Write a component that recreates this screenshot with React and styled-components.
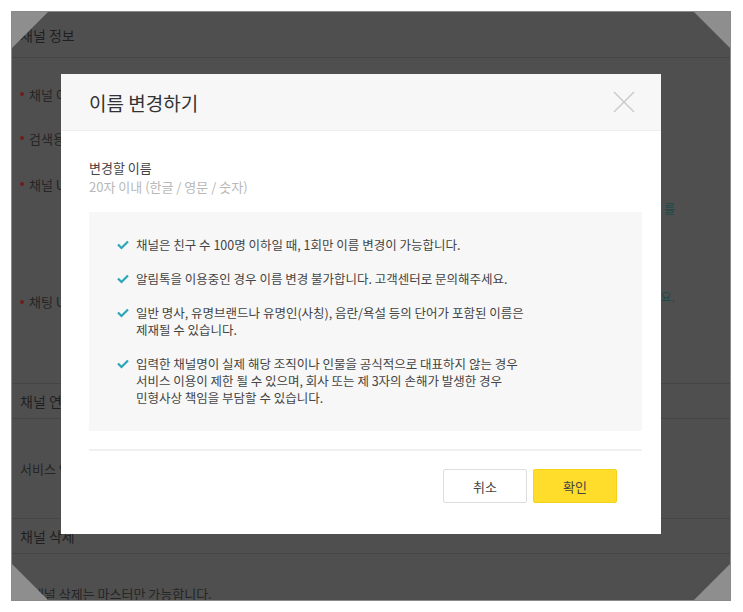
import React from "react";
import styled, { createGlobalStyle } from "styled-components";

const G = createGlobalStyle`
  body { margin: 0; background: #fff; font-family: "Noto Sans CJK KR", "Noto Sans", sans-serif; }
`;
const Frame = styled.div`
  position: relative; margin: 11px 11px 0 11px; width: 720px; height: 590px;
  background: #4f4f4f; border: 1px solid #8a8a8a; box-sizing: border-box; overflow: hidden;
`;
const SecHead = styled.div`
  height: ${p => p.h || 46}px; display: flex; align-items: center; padding-left: 8px;
  font-size: 14px; color: #1f1f1f; border-bottom: 1px solid #454545; box-sizing: border-box;
  border-top: ${p => p.bt ? "1px solid #454545" : "none"};
`;
const Row = styled.div`
  height: ${p => p.h}px; padding-left: 8px; display: flex; align-items: center;
  font-size: 13px; color: #252525; gap: 5px; box-sizing: border-box; padding-top: ${p => p.pt || 0}px;
`;
const Dot = styled.span`width: 4px; height: 4px; border-radius: 50%; background: ${p => p.c || "#6b1e1a"};`;
const Teal = styled.span`position: absolute; right: 55px; top: ${p => p.t}px; color: #1a4a48; font-size: 12px;`;
const Corner = styled.div`
  position: absolute; width: 36px; height: 36px; background: #8e8e8e;
  ${p => p.pos}
`;
const Overlay = styled.div`
  position: absolute; left: 49px; top: 62px; width: 600px; height: 460px; background: #fff;
  display: flex; flex-direction: column;
`;
const MHead = styled.div`
  height: 57px; background: #f7f7f7; border-bottom: 1px solid #eee; display: flex;
  align-items: center; justify-content: space-between; padding: 0 26px 0 28px; box-sizing: border-box;
`;
const Title = styled.div`font-size: 19px; color: #333;`;
const Body = styled.div`padding: 27px 19px 0 28px;`;
const Label = styled.div`font-size: 13px; color: #444; line-height: 19px;`;
const Sub = styled.div`font-size: 13px; color: #b8b8b8; line-height: 19px;`;
const Box = styled.div`
  margin-top: 16px; background: #f7f7f7; height: 219px; box-sizing: border-box;
  padding: 24px 28px 0 28px; display: flex; flex-direction: column; gap: 17px;
`;
const Item = styled.div`display: flex; gap: 7px; font-size: 12.5px; color: #444; line-height: 17px;`;
const Hr = styled.div`margin-top: 18px; height: 2px; background: #f0f0f0;`;
const Btns = styled.div`display: flex; justify-content: flex-end; gap: 6px; padding: 18px 25px 0 0;`;
const Btn = styled.button`
  width: 84px; height: 34px; font-family: inherit; font-size: 13px; color: #444;
  background: ${p => p.y ? "#ffdd2a" : "#fff"}; border: 1px solid ${p => p.y ? "#f5d21e" : "#ddd"}; border-radius: 2px;
`;

const Check = () => (
  <svg width="12" height="17" viewBox="0 0 12 17" style={{ flex: "none" }}>
    <path d="M1 8.5l3.5 3.5L11 5.5" stroke="#2aa6b8" strokeWidth="2.2" fill="none" />
  </svg>
);

const items = [
  ["채널은 친구 수 100명 이하일 때, 1회만 이름 변경이 가능합니다."],
  ["알림톡을 이용중인 경우 이름 변경 불가합니다. 고객센터로 문의해주세요."],
  ["일반 명사, 유명브랜드나 유명인(사칭), 음란/욕설 등의 단어가 포함된 이름은", "제재될 수 있습니다."],
  ["입력한 채널명이 실제 해당 조직이나 인물을 공식적으로 대표하지 않는 경우", "서비스 이용이 제한 될 수 있으며, 회사 또는 제 3자의 손해가 발생한 경우", "민형사상 책임을 부담할 수 있습니다."],
];

export default function App() {
  return (
    <>
      <G />
      <Frame>
        <SecHead>채널 정보</SecHead>
        <Row h={70} pt={2}><Dot />채널 이름</Row>
        <Row h={20}><Dot />검색용 아이디</Row>
        <Row h={72}><Dot />채널 URL</Row>
        <Row h={163}><Dot />채팅 URL</Row>
        <SecHead h={36} bt>채널 연결</SecHead>
        <Row h={99}>서비스 연결</Row>
        <SecHead h={36} bt>채널 삭제</SecHead>
        <Row h={70} pt={8}><Dot c="#777" />&nbsp;채널 삭제는 마스터만 가능합니다.</Row>
        <Teal t={188}>를</Teal>
        <Teal t={276}>요.</Teal>
        <Corner pos="left:0;top:0;clip-path:polygon(0 0,100% 0,0 100%);" />
        <Corner pos="right:0;top:0;clip-path:polygon(0 0,100% 0,100% 100%);" />
        <Corner pos="left:0;bottom:0;clip-path:polygon(0 0,100% 100%,0 100%);" />
        <Corner pos="right:0;bottom:0;clip-path:polygon(100% 0,100% 100%,0 100%);" />
        <Overlay>
          <MHead>
            <Title>이름 변경하기</Title>
            <svg width="22" height="22" viewBox="0 0 22 22"><path d="M1 1l20 20M21 1L1 21" stroke="#c8c8c8" strokeWidth="1.3" /></svg>
          </MHead>
          <Body>
            <Label>변경할 이름</Label>
            <Sub>20자 이내 (한글 / 영문 / 숫자)</Sub>
            <Box>
              {items.map((lines, i) => (
                <Item key={i}><Check /><div>{lines.map((l, j) => <div key={j}>{l}</div>)}</div></Item>
              ))}
            </Box>
            <Hr />
            <Btns><Btn>취소</Btn><Btn y>확인</Btn></Btns>
          </Body>
        </Overlay>
      </Frame>
    </>
  );
}
